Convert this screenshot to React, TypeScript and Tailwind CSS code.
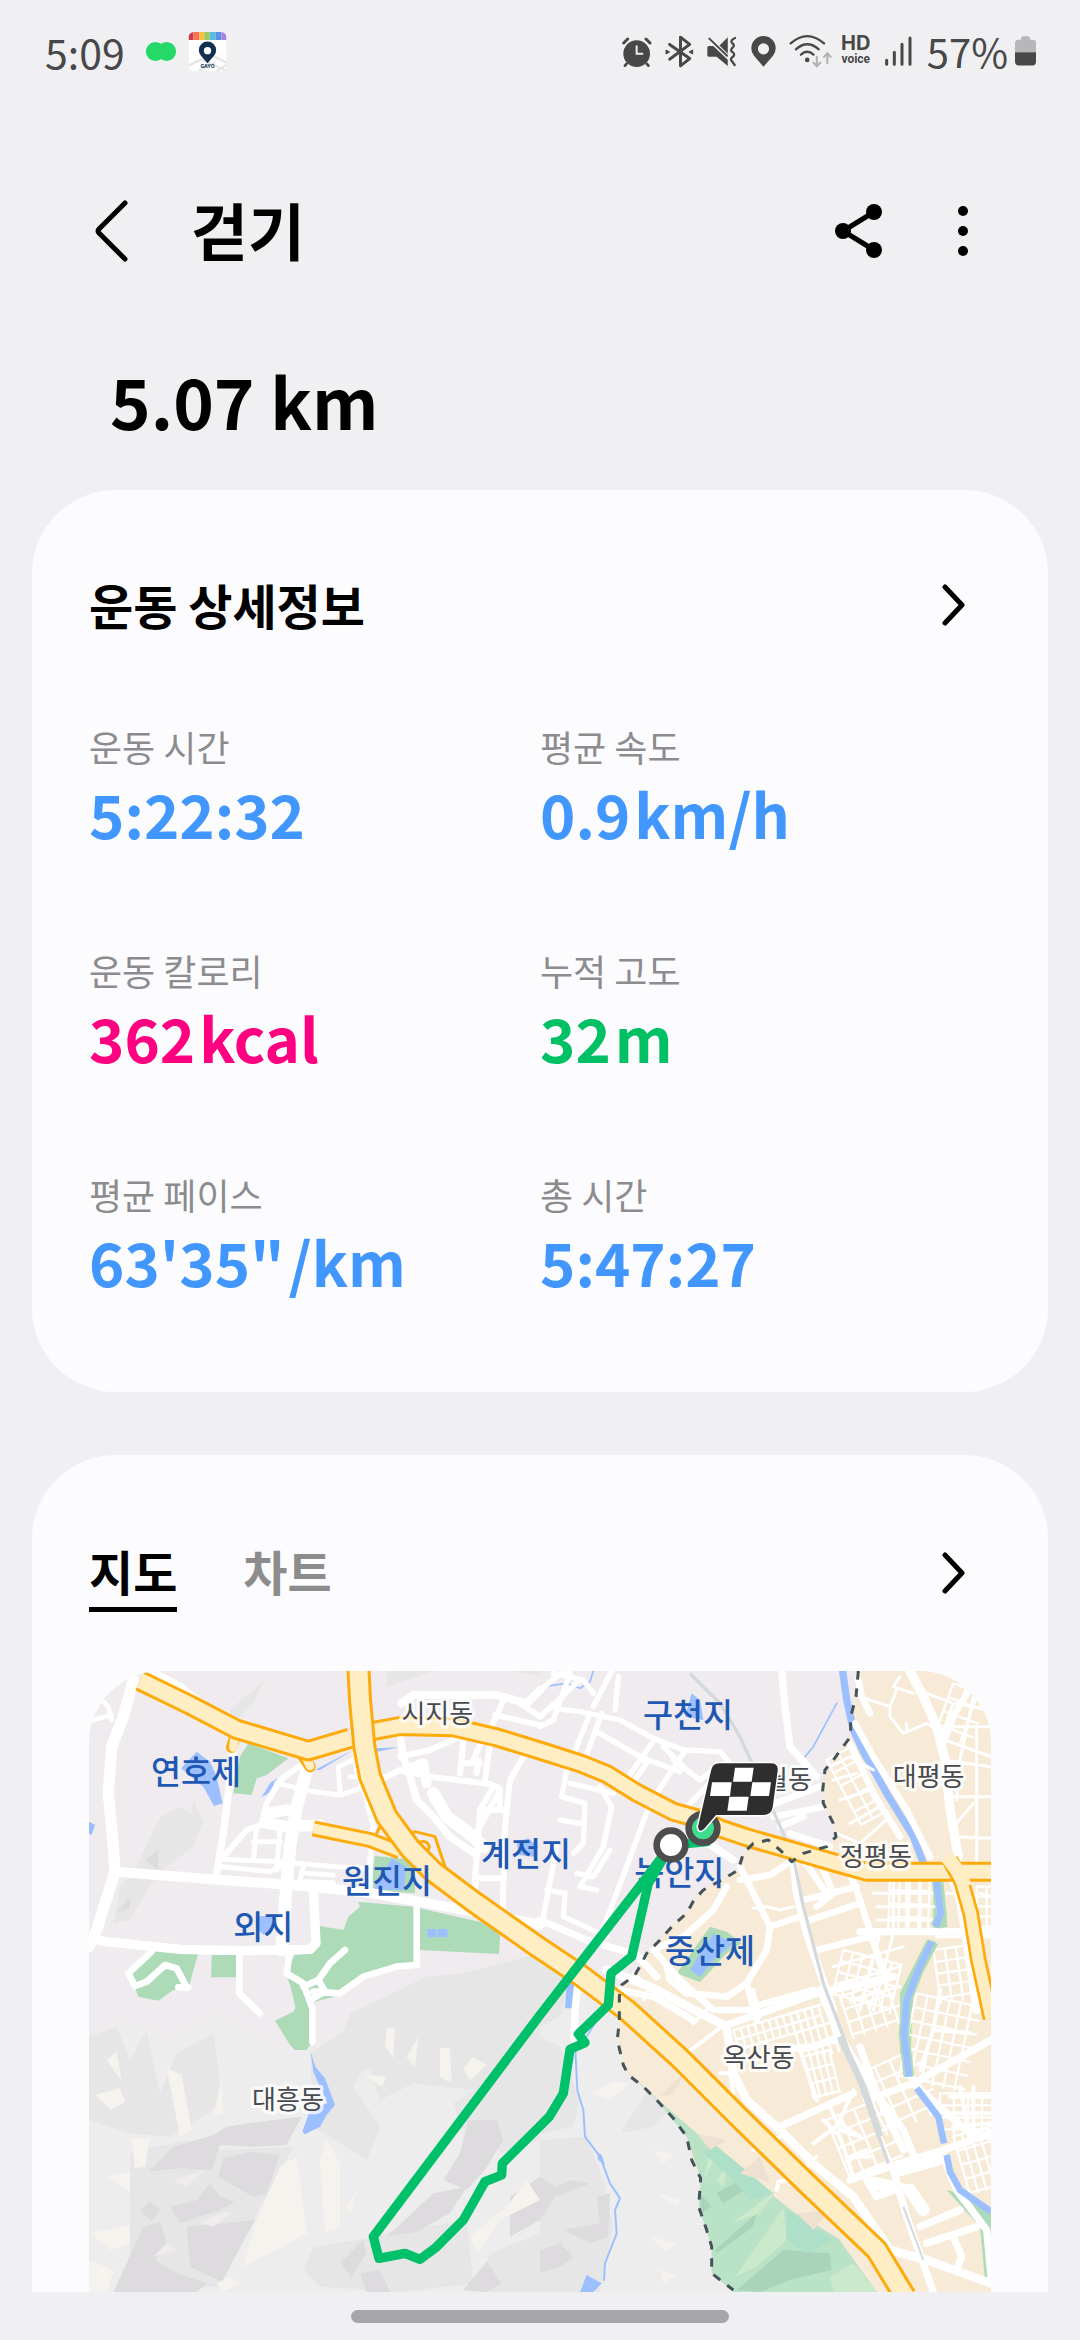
import React from "react";

type Stroke = [number, string];

const ink = "#484848";

/* ---------- Status bar icons ---------- */

function AppBadge() {
  return (
    <svg viewBox="0 0 114 117" className="h-[39px] w-[39px]" aria-hidden="true">
      <clipPath id="badge">
        <rect width="114" height="117" rx="16" />
      </clipPath>
      <g clipPath="url(#badge)">
        <rect width="114" height="117" fill="#fff" />
        <path d="M0 100L40 82L114 117M30 117L80 90M70 70L114 92M85 117L114 98" stroke="#e6e6e8" strokeWidth="7" fill="none" />
        <rect width="15" height="24" fill="#cf3948" />
        <rect x="15" width="17" height="24" fill="#fb7355" />
        <rect x="32" width="15" height="24" fill="#fdbe4b" />
        <rect x="47" width="17" height="24" fill="#9dcb62" />
        <rect x="64" width="17" height="24" fill="#56bde4" />
        <rect x="81" width="18" height="24" fill="#5a8fe4" />
        <rect x="99" width="15" height="24" fill="#a383df" />
        <path d="M57 94L38 72A26 26 0 1 1 76 72Z" fill="#12304f" />
        <circle cx="57" cy="56" r="11" fill="#fff" />
        <text x="57" y="109" textAnchor="middle" fontSize="15" fontWeight="700" fontFamily="Inter, sans-serif" fill="#12304f">GAYO</text>
      </g>
    </svg>
  );
}

function StatusIcons() {
  return (
    <>
      <svg viewBox="62 103 90 93" className="h-[31px] w-[30px]" aria-label="알람">
        <circle cx="106" cy="156" r="40" fill={ink} />
        <path d="M67 124L79 112M146 124L134 112" stroke={ink} strokeWidth="9" strokeLinecap="round" />
        <path d="M76 186L71 192M136 186L141 192" stroke={ink} strokeWidth="8" strokeLinecap="round" />
        <path d="M106 134V156H123" stroke="#f0f0f2" strokeWidth="6" fill="none" strokeLinecap="round" />
      </svg>
      <svg viewBox="189 101 88 99" className="ml-[13px] h-[33px] w-[29px]" aria-label="블루투스">
        <path d="M203 129L264 172L236 194V107L264 129L203 174" stroke={ink} strokeWidth="9" fill="none" strokeLinecap="round" strokeLinejoin="round" />
        <path d="M192 146L203 152L192 158ZM273 146L262 152L273 158Z" fill={ink} stroke={ink} strokeWidth="3" strokeLinejoin="round" />
      </svg>
      <svg viewBox="313 104 92 94" className="ml-3 h-[31px] w-[31px]" aria-label="진동">
        <path d="M316 139Q316 134 321 134H334L378 176V195L344 167H321Q316 167 316 162ZM378 108V158L353 133Z" fill={ink} />
        <path d="M322 112L376 164" stroke={ink} strokeWidth="6" strokeLinecap="round" />
        <path d="M400 110Q384 118 391 125Q402 132 391 141Q384 148 394 154Q402 162 391 169Q384 176 392 182L399 192" stroke={ink} strokeWidth="7" fill="none" strokeLinecap="round" />
      </svg>
      <svg viewBox="446 103 76 94" className="ml-[14px] h-[31px] w-[25px]" aria-label="위치">
        <path fillRule="evenodd" d="M484 196L455 163A37 37 0 1 1 513 163ZM484 125A17 17 0 1 0 484 159A17 17 0 1 0 484 125Z" fill={ink} />
      </svg>
      <svg viewBox="562 100 130 102" className="ml-[13px] h-[34px] w-[43px]" aria-label="와이파이">
        <g stroke={ink} strokeWidth="7" fill="none" strokeLinecap="round">
          <path d="M567 128Q617 84 668 128" />
          <path d="M583 146Q617 115 652 146" />
          <path d="M598 162Q617 145 636 162" />
        </g>
        <circle cx="617" cy="178" r="7" fill={ink} />
        <path d="M646 168V196M636 186L646 197L657 186M678 188V159M668 169L678 158L688 169" stroke="#b0b0b2" strokeWidth="6" fill="none" strokeLinecap="round" />
      </svg>
      <div className="ml-2 flex w-8 flex-col items-center font-[Inter,sans-serif] font-bold text-[#484848]">
        <span className="text-[20px] leading-4">HD</span>
        <span className="font-[Roboto,sans-serif] text-[12px] leading-4">voice</span>
      </div>
      <svg viewBox="850 106 84 90" className="ml-[12px] h-[30px] w-7" aria-label="신호">
        <path d="M858 179V191M881 155V191M904 131V191M928 112V191" stroke={ink} strokeWidth="9" strokeLinecap="round" />
      </svg>
      <span className="ml-[15px] text-[40px] leading-[48px] text-[#484848]">57%</span>
      <svg viewBox="1241 107 64 90" className="ml-[7px] h-[30px] w-[21px]" aria-label="배터리">
        <path d="M1241 156V128Q1241 118 1252 118H1259Q1259 107 1266 107H1280Q1287 107 1287 118H1294Q1305 118 1305 128V156Z" fill="#b7b7b9" />
        <path d="M1241 156H1305V184Q1305 196 1294 196H1252Q1241 196 1241 184Z" fill={ink} />
      </svg>
    </>
  );
}

function Chevron() {
  return (
    <svg viewBox="0 0 24 42" className="h-[42px] w-6" fill="none" stroke="#000" strokeWidth="5" strokeLinecap="round" strokeLinejoin="round" aria-hidden="true">
      <path d="M4 3L21 21L4 39" />
    </svg>
  );
}

/* ---------- Map ---------- */

const westStreets: Stroke[] = [
  [34, "M160 60L130 170L95 260L85 400L100 560L105 635L50 810L27 860"],
  [30, "M105 635L300 650L420 660L640 675L880 700L1180 755L1380 795"],
  [28, "M27 835L80 845L300 868L500 872L690 868L708 850L700 690"],
  [22, "M465 230L445 400L430 520L410 640"],
  [18, "M430 590L500 510L545 495L560 430L600 360L670 310"],
  [38, "M680 330L650 440L630 560L620 670L605 870"],
  [34, "M560 460L620 450M560 490L620 500L720 495"],
  [15, "M590 370L700 395L780 405L860 380M780 400L775 320L830 295M810 350H860M425 620L570 635L620 610M430 598L600 605L770 620L870 625M530 500L520 600M600 510L590 630M520 545H600M670 620L660 660M680 640L760 645M670 665L760 668"],
  [16, "M820 210L830 330L860 420L880 500L870 600L870 700"],
  [22, "M960 225L970 290L990 350L1010 420L1060 470L1110 530L1190 585"],
  [38, "M1060 400L1100 470L1180 530L1210 560"],
  [30, "M980 330L1030 310L1040 370"],
  [18, "M900 360L960 330L1050 350L1230 372L1258 385L1260 450M960 290L1050 270L1140 230M1230 250L1215 360M1330 290L1290 360L1275 500L1268 750M1150 240L1140 340M1200 255L1180 300M1195 300L1190 340M1150 310H1200M1240 380L1200 450L1185 660M1200 450H1270M1190 655H1270M1200 500L1260 390M1190 650L1180 720"],
  [24, "M965 130L1000 105H1250L1340 130L1380 90"],
  [17, "M1275 110L1235 200L1230 250M1245 165L1380 195M1320 130L1380 170"],
  [14, "M50 105L85 140L95 180M30 182L95 165"],
  [24, "M210 33L300 80L350 120"],
  [20, "M630 870L620 940L670 970L697 1045V1145M1010 740V915L950 920L850 950L780 1000L700 995L735 995L715 960M795 870L750 910L715 960L670 980M690 1020L735 995"],
  [20, "M478 880V1000L540 1060"],
  [20, "M215 875L145 940L165 978L200 965L255 915L290 925L322 985M295 982H325"],
];

const midStreets: Stroke[] = [
  [16, "M0 90L50 50L80 33M90 40L40 180L0 200M40 145L120 155L240 180L340 235L430 270L540 275L570 310M235 50L225 150M215 33L160 140M185 160L130 310M150 160L90 310M170 215L300 290L420 335M345 235L265 350M430 280L330 430L260 620L180 830M160 100L130 60L40 40M0 170L120 60M370 260L440 330M300 290L320 310L270 380M400 300L480 360L520 330M440 440L520 360M80 330L65 410L135 430L130 550L100 580M90 370L220 400M180 380L215 440L190 560L120 680L170 690M50 560L10 770M20 690L75 700L70 770L200 830M60 480L120 490M110 640L160 650L210 570"],
  [22, "M0 780L140 840L290 885L350 950M440 520L520 560L580 600"],
  [22, "M725 33L735 140L750 260L830 350"],
  [20, "M680 440L840 380M700 470L850 440M720 500L790 470M750 520L870 560"],
];

const eastStreets: Stroke[] = [
  [28, "M1110 33L1150 110L1190 200L1215 300L1230 450L1255 590"],
  [20, "M1310 50L1240 170L1205 260M990 160L965 110L955 60M930 250L1000 400L1080 530M945 190L1000 290L1100 450L1170 590"],
  [9, "M1160 100L1240 130L1353 150M1260 60L1353 100M1290 50L1353 80M1230 200L1353 200M1215 240L1353 290M1240 130L1200 240M1300 110L1260 300L1250 420M1080 50L1060 80L1120 100M1070 90L1050 140L960 110M1050 140V170L1090 220L1160 190L1210 220M1100 190V210M1210 300L1353 320M1240 410H1353M1310 200V600M1240 530L1353 535M1240 500L1300 430M870 320L930 290L1000 330M880 360L950 340M900 420L990 390M930 490L1020 440M890 520L960 550L1050 470M910 560L1000 620"],
  [24, "M760 600L770 700L800 820L880 1050M1230 640L1260 720L1280 850L1310 1050"],
  [20, "M600 620L650 720L690 800L680 870L620 970L560 1010L440 1000L390 960L380 920M560 680L520 750L430 830L340 870M600 660L690 645L760 600M690 800L780 770M790 720L950 680M810 780L960 730M930 640L960 720L1030 940M850 630L880 700L830 740M830 870L1010 825M790 600L860 700M350 880L420 960L520 1050L640 1050M620 970L650 1080M640 1040L820 990M240 990L340 1010L460 1080"],
  [9, "M640 745L680 740L720 750L760 740M1060 650V800M1100 650V800M1140 660V800M1000 700H1180M1010 740H1190M1010 780H1180M880 920L1090 860M900 970L1080 920M930 1020L1080 980M1060 820L1000 1050M1020 820L960 1050M280 940L330 980L310 1020M1190 830H1353M1220 700H1260M1320 700L1353 710"],
  [22, "M960 815H1353"],
];

const southStreets: Stroke[] = [
  [26, "M200 -60L330 -10L560 110L580 250L620 330L720 420L830 530L940 620L1050 780L1160 810L1353 880"],
  [22, "M560 105L830 10L1060 -40M840 0L900 140L1000 300L1090 420L1130 520M720 410L940 310M900 140L820 170L760 175M980 330L1120 280L1353 150M960 170L1010 310L1090 480M1120 280L1220 370L1290 430L1353 440M930 570L1080 520L1210 480L1353 430M1060 540L1100 680L1180 906M980 570L1010 620L1090 590M1210 500L1250 600L1340 720L1353 860M1140 710L1260 660M1160 760L1310 710M1240 740L1265 800L1250 840"],
  [12, "M1180 120L1290 130M1200 0L1180 120L1140 240M1230 320H1353M1220 370H1353M1240 410L1353 400M1300 290V430M1260 290L1280 400M780 180L830 330M850 390L900 440L940 560M820 460L900 400L960 440M870 350L900 420L960 440M940 300L900 390M830 500L790 540M980 480L930 500L990 500M540 250H580M545 110L440 190M460 100L500 60M570 250L580 310M710 600L715 575L750 570M640 480L740 430M250 10L290 50M640 0L660 80"],
  [38, "M1080 540L1190 510M1000 580L1060 590M1110 600L1150 660"],
];

const hillsDark = [
  "M205 1535L280 1460L400 1425L440 1400L540 1385L665 1370L620 1455L520 1460L420 1455L395 1530L300 1525Z",
  "M430 1495L510 1475L600 1485L560 1600L520 1610L415 1550Z",
  "M320 1700L525 1680L425 1865L330 1820Z",
  "M180 1650L210 1625L240 1650L215 1685ZM270 1640L350 1620L390 1570L420 1610L465 1625L420 1650L300 1690Z",
  "M100 1896L190 1700L240 1685L260 1750L225 1800L290 1840L380 1870L350 1896Z",
  "M1140 1480L1165 1380L1250 1380L1270 1440L1215 1530L1160 1590L1090 1560Z",
  "M920 1730L1060 1600L1160 1580L1110 1660L1010 1715Z",
  "M780 1810L850 1740L860 1780L815 1850ZM840 1840L900 1830L930 1896H860Z",
  "M1150 1890L1220 1805L1265 1870L1220 1896ZM1290 1610L1380 1550L1440 1590L1380 1680L1290 1730Z",
  "M195 600L235 570V630ZM110 760L150 710L150 745Z",
  "M1410 1590L1470 1560L1530 1570L1430 1610ZM1550 1610L1590 1600L1585 1730L1530 1750L1450 1710L1560 1690ZM1380 1770L1440 1750L1480 1790L1440 1820L1380 1840Z",
];

const hillsLight = [
  "M27 1130L110 1100L150 1200L200 1110L240 1300L290 1180L400 1120L430 1330L270 1430L150 1420L27 1380Z",
  "M150 1480L320 1440L420 1470L640 1460L530 1660L420 1880L150 1896Z",
  "M240 470L300 440L370 480L340 560L260 620L200 690L150 780L100 790L120 680L160 640Z",
  "M340 420L365 480L330 500ZM450 150L550 65L520 130L460 190Z",
  "M920 33H1060L920 80ZM1300 33L1380 50V33Z",
  "M810 1060L1040 950L1150 940L1380 880L1380 1440L1270 1480L1140 1400L1120 1330L1180 1290L1000 1270L900 1320L870 1230L750 1230Z",
  "M690 1180L810 1100L860 1210L820 1280L900 1400L860 1500L700 1400Z",
  "M670 1830L700 1760L830 1740L970 1710L1160 1680L1180 1870L960 1896L720 1880Z",
  "M1380 920L1450 910L1470 960L1440 1070L1380 1100ZM1380 1130L1440 1160L1500 1320L1480 1400L1380 1420ZM1620 1420L1700 1300L1790 1330L1720 1400Z",
  "M1380 1440L1520 1430L1570 1560L1600 1700L1560 1896H1380Z",
  "M1230 1780L1380 1720V1896H1180ZM1230 1340L1310 1350L1320 1420L1260 1380Z",
];

const hillsCream = [
  "M80 1200L110 1175L125 1265ZM45 1305L120 1285L135 1325L95 1350ZM260 1225L305 1245L335 1410L300 1430Z",
  "M400 1370L425 1255L430 1360ZM155 1435H210L195 1520L165 1525ZM85 1550L150 1535V1600ZM30 1720L150 1695V1750L90 1770ZM27 1800L100 1830L80 1896H27Z",
  "M600 1520L650 1490L680 1720L600 1765L490 1820L530 1680ZM720 1500L740 1440L780 1510V1705L735 1715Z",
  "M920 1105H945L940 1195L915 1160ZM980 1190L1015 1130L1005 1225ZM1080 1165H1110L1115 1270L1080 1250ZM1150 1225L1180 1190L1220 1215L1170 1260ZM855 1245L920 1250L905 1280Z",
  "M1170 1730L1280 1640L1340 1560L1380 1620L1260 1680L1195 1780ZM800 1640L830 1590L815 1660ZM410 1870L450 1850L480 1870L430 1896Z",
  "M1530 1300L1600 1265L1650 1270L1590 1320ZM1720 1470L1780 1485L1750 1510ZM1730 1600L1800 1620L1790 1640ZM1710 1730L1790 1750L1760 1775ZM1740 1830L1790 1845L1750 1870Z",
];

const grids = [
  { x: 1960, y: 1110, w: 260, h: 60, gap: 22, row: 30, angle: -16 },
  { x: 2130, y: 1060, w: 110, h: 150, gap: 22, row: 60, angle: -16 },
  { x: 2170, y: 1190, w: 80, h: 130, gap: 20, row: 42, angle: -14 },
  { x: 2290, y: 870, w: 180, h: 150, gap: 30, row: 34, angle: 14 },
  { x: 2280, y: 1010, w: 160, h: 130, gap: 36, row: 40, angle: -18 },
  { x: 2560, y: 870, w: 150, h: 160, gap: 34, row: 36, angle: -8 },
  { x: 2510, y: 1000, w: 200, h: 260, gap: 34, row: 42, angle: 12 },
  { x: 2580, y: 1300, w: 150, h: 130, gap: 42, row: 36, angle: 0 },
  { x: 2620, y: 1430, w: 120, h: 180, gap: 26, row: 44, angle: -16 },
  { x: 2240, y: 1380, w: 170, h: 190, gap: 44, row: 46, angle: -22 },
  { x: 2340, y: 1240, w: 180, h: 200, gap: 48, row: 44, angle: -24 },
  { x: 2430, y: 650, w: 120, h: 160, gap: 30, row: 40, angle: 2 },
  { x: 2620, y: 70, w: 110, h: 160, gap: 40, row: 44, angle: 20 },
  { x: 2240, y: 300, w: 80, h: 220, gap: 40, row: 44, angle: -28 },
  { x: 2690, y: 680, w: 60, h: 150, gap: 30, row: 30, angle: 0 },
];

const border =
  "M2335 33L2328 110L2312 170L2312 230L2285 265L2260 300L2235 330L2228 390L2230 430L2260 490L2268 530L2240 560L2170 580L2135 605L2100 570L2065 540L2020 550L1990 580L1975 630L1925 660L1870 690L1842 720L1820 760L1780 795L1740 840L1700 880L1682 915L1665 945L1625 975L1618 1010V1080L1612 1140L1630 1215L1645 1245L1690 1280L1730 1320L1780 1375L1820 1430L1835 1500L1862 1555L1856 1640L1880 1710L1895 1760V1840L1960 1890";

const highways: [string, number, number][] = [
  ["M700 505L870 540L960 575", 48, 30],
  ["M180 62L330 135L470 208L685 272L810 235", 64, 46],
  ["M870 215L960 198L1120 202L1250 232L1380 272L1500 310L1580 342L1670 398L1780 455L1870 480L1920 505L2000 532L2140 572L2270 610L2360 635H2733", 60, 42],
  ["M2610 600L2645 665L2672 760L2695 900L2733 1075", 50, 34],
  ["M835 20L840 120L853 260L870 350L920 470L990 565L1060 635L1180 725L1380 865L1500 945L1580 1005L1640 1050L1800 1195L1980 1375L2180 1570L2390 1770L2475 1910", 72, 54],
];

const places = [
  { name: "시지동", x: 1072, y: 188 },
  { name: "대평동", x: 2546, y: 378 },
  { name: "정평동", x: 2388, y: 618 },
  { name: "대흥동", x: 624, y: 1346 },
  { name: "옥산동", x: 2036, y: 1220 },
];

const ponds = [
  { name: "연호제", x: 348, y: 372 },
  { name: "구천지", x: 1824, y: 202 },
  { name: "원진지", x: 921, y: 700 },
  { name: "계전지", x: 1338, y: 618 },
  { name: "녹안지", x: 1798, y: 674 },
  { name: "중산제", x: 1890, y: 910 },
  { name: "외지", x: 550, y: 838 },
];

function Streets({ items }: { items: Stroke[] }) {
  return (
    <>
      {items.map(([width, d]) => (
        <path key={d} d={d} strokeWidth={width} />
      ))}
    </>
  );
}

function StreetGrid({ x, y, w, h, gap, row, angle }: (typeof grids)[number]) {
  const lines: string[] = [];
  for (let i = 0; i <= w; i += gap) lines.push(`M${i} 0V${h}`);
  for (let j = 0; j <= h; j += row) lines.push(`M0 ${j}H${w}`);
  return <path d={lines.join("")} strokeWidth="7" transform={`translate(${x} ${y}) rotate(${angle})`} />;
}

function RouteMap() {
  return (
    <svg
      viewBox="27 33 2706 1863"
      className="block w-full rounded-t-[72px]"
      role="img"
      aria-label="걷기 경로 지도"
      fontFamily="'Noto Sans CJK KR', sans-serif"
    >
      <rect x="27" y="33" width="2706" height="1863" fill="#efebee" />

      <path d="M27 1130L130 1080L260 1140L400 1060L560 1130L640 1200L860 1060L1380 900L1640 1100L1690 1290L1830 1440L1900 1896H27Z" fill="#eeeeee" opacity="0.7" />
      <g fill="#e6e6e7">{hillsLight.map((d) => <path key={d} d={d} />)}</g>
      <g fill="#dddbde">{hillsDark.map((d) => <path key={d} d={d} />)}</g>
      <g fill="#f6f3ee">{hillsCream.map((d) => <path key={d} d={d} />)}</g>
      <path d="M280 1560L375 1530L320 1580ZM360 1690L430 1655L455 1660L400 1700ZM220 1790L260 1750L290 1770Z" fill="#efebee" />

      <path d={border + "L2733 1896V33Z"} fill="#f7ead6" />
      <path d="M1630 1225L1780 1360L1980 1530L2140 1655L2275 1735L2390 1896H1960L1895 1840V1760L1856 1640L1862 1555L1820 1430L1730 1320Z" fill="#b9e2c6" />
      <path d="M1910 1600L1980 1560L2010 1580L1930 1630ZM1905 1770L2030 1660L2020 1700L1910 1780ZM1970 1890L2110 1770L2250 1780L2255 1830L2130 1860L2040 1896ZM1860 1600L1895 1640L1865 1660Z" fill="#abd3bb" />
      <path d="M1910 1560L1950 1500L1930 1580ZM1955 1690L2090 1590L2040 1660ZM1965 1850L2110 1645L2120 1740L2030 1820ZM2250 1850L2320 1810L2390 1896H2260ZM1890 1470L1915 1480L1870 1560Z" fill="#cbeacb" />
      <path d="M1870 1480L1900 1450L2080 1600L2010 1620L1960 1560ZM2120 1650L2260 1740L2180 1780L2120 1740Z" fill="#aedfc9" />
      <path d="M1740 1310L1800 1250L1820 1230L1780 1300ZM1980 1540L2040 1490L2070 1570ZM1850 1420L1940 1440L1890 1470ZM2150 1660L2250 1650L2200 1710Z" fill="#efe1d2" />

      <g fill="#addbb8">
        <path d="M480 290L505 250L625 295L560 345L530 355L515 405L460 400Z" />
        <path d="M885 588L1005 600V700L870 690Z" />
        <path d="M720 798L790 810L805 770L840 740L835 725L1000 740L1262 800L1257 882L1020 870L1015 910L850 950L780 1005L690 1030L660 1100L620 930L645 885L700 880L720 850Z" />
        <path d="M395 885H468V952H393ZM230 870L355 880L340 930L325 990H280L235 1022L175 1010L150 940Z" />
        <path d="M620 950L655 1030L640 1055L585 1082L630 1155L645 1170H680L697 1145L690 1040Z" />
        <path d="M1890 800L1940 815L1985 850L1940 880L1860 967L1790 940Z" />
        <path d="M2560 665L2590 660L2602 800L2560 810Z" />
        <path d="M2540 840L2568 845L2500 1000L2495 1100L2490 1260L2460 1180L2460 1000Z" />
        <path d="M2600 1590L2640 1600L2733 1660V1860L2715 1860L2700 1700Z" />
      </g>

      <g fill="#9cc0ff">
        <path d="M350 275L390 305L410 350L428 430L402 438L370 380L303 325Z" />
        <path d="M528 770L580 765L575 810L550 825L528 800ZM935 595L978 620L972 690L880 688ZM1042 807H1068V832H1042ZM1072 807H1103V832H1072ZM27 485L45 495L35 525L27 522Z" />
        <path d="M1310 545L1345 535L1375 560L1360 590L1315 585ZM1835 100L1860 120L1870 180L1815 170Z" />
        <path d="M1900 820L1960 850L1900 900L1860 950L1830 930Z" />
        <path d="M692 1175L706 1220L735 1255L765 1335L740 1365L720 1400L675 1423L667 1415L690 1350L742 1330L700 1235Z" />
        <path d="M605 345L565 400L545 412L570 370ZM705 330L800 280L820 270L720 330ZM885 265L960 262L890 275ZM1460 970H1483L1477 1045H1455Z" />
        <path d="M1500 1896L1520 1845L1565 1870L1540 1896ZM1550 1475L1565 1485L1575 1515L1555 1500Z" />
      </g>
      <g fill="none" stroke="#9cc0ff" strokeLinecap="round" strokeLinejoin="round">
        <path d="M2288 33L2300 120L2320 210L2350 275L2420 400L2500 530L2530 610" strokeWidth="22" />
        <path d="M1485 1150L1492 1290L1510 1350L1515 1430L1560 1490L1590 1570L1620 1615L1605 1650L1610 1720L1575 1810L1572 1860" strokeWidth="6" />
        <path d="M1540 33L1530 65L1500 85L1460 70L1390 80M2270 130L2200 260L2175 290M1545 1090L1520 1130" strokeWidth="5" />
      </g>

      <g fill="none" stroke="#fff" strokeLinecap="round" strokeLinejoin="round">
        <Streets items={westStreets} />
        <g transform="translate(1380 0)">
          <Streets items={midStreets} />
          <Streets items={eastStreets} />
        </g>
        <g transform="translate(1380 990)">
          <Streets items={southStreets} />
        </g>
        {grids.map((g) => <StreetGrid key={`${g.x}-${g.y}`} {...g} />)}
        <path d="M1482 1140L1486 1040L1495 960" strokeWidth="22" />
      </g>

      <g fill="none" stroke="#d4d9db">
        <path d="M1830 40L1920 130L1980 230L2070 430L2140 590L2170 740L2230 970L2290 1130L2425 1510" strokeWidth="10" />
        <path d="M2280 1130L2350 1280L2400 1430" strokeWidth="20" />
        <path d="M2470 1640L2530 1800" strokeWidth="6" />
      </g>
      <g fill="none" strokeLinejoin="round">
        <path d="M2572 665L2584 760L2567 800M2560 845L2515 930L2480 1020L2472 1120L2487 1250" stroke="#addbb8" strokeWidth="32" />
        <path d="M2570 665L2582 760L2567 800M2555 845L2515 930L2480 1020L2472 1120L2487 1250M2510 1285L2575 1370L2592 1450M2600 1485L2610 1535L2640 1590L2733 1655" stroke="#9cc0ff" strokeWidth="20" />
      </g>

      <g fill="none" strokeLinejoin="round">
        <path d="M985 525L1005 515L1065 530L1095 620M880 540L905 490L925 530M1010 550Q1040 535 1048 560Q1045 580 1025 575" stroke="#fdaa0b" strokeWidth="9" />
        <path d="M465 230L455 262M670 290L690 320" stroke="#fdaa0b" strokeWidth="34" strokeLinecap="round" />
        <path d="M465 225L460 262M672 280L690 318" stroke="#ffedc4" strokeWidth="26" strokeLinecap="round" />
        {highways.map(([d, outer, inner]) => (
          <React.Fragment key={d}>
            <path d={d} stroke="#fdaa0b" strokeWidth={outer} />
            <path d={d} stroke="#ffedc4" strokeWidth={inner} />
          </React.Fragment>
        ))}
        <path d="M2600 590L2640 640L2655 680" stroke="#ffedc4" strokeWidth="42" />
        <path d={border} stroke="#465358" strokeWidth="9" strokeDasharray="26 26" />
      </g>

      <g textAnchor="middle">
        <g fontSize="78" fill="#474a4f" stroke="#ffffff" strokeOpacity="0.75" strokeWidth="20" strokeLinejoin="round" paintOrder="stroke">
          <text x="2124" y="386">월동</text>
          {places.map((p) => <text key={p.name} x={p.x} y={p.y}>{p.name}</text>)}
        </g>
        <g fontSize="98" fill="#1f58b3" fontWeight="500">
          {ponds.map((p) => <text key={p.name} x={p.x} y={p.y}>{p.name}</text>)}
        </g>
      </g>

      <path
        d="M1773 555L1690 665L1380 1065L880 1730L897 1795L975 1780L1020 1798L1065 1765L1150 1680L1215 1565L1265 1545L1267 1510L1380 1398L1408 1370L1450 1300L1470 1168L1515 1148L1495 1122L1585 1035L1593 940L1655 890L1705 670L1773 555L1880 545"
        fill="none" stroke="#00c06a" strokeWidth="28" strokeLinejoin="round" strokeLinecap="round"
      />
      <circle cx="1869" cy="505" r="43" fill="#3edc8c" stroke="#4d4d4d" strokeWidth="20" />
      <circle cx="1773" cy="555" r="43" fill="#fff" stroke="#4d4d4d" strokeWidth="20" />
      <path
        d="M1918 310H2072Q2096 310 2093 332L2078 442Q2074 465 2050 465H1908L1874 505Q1858 522 1854 500L1893 332Q1897 310 1918 310Z"
        fill="#2e2e2e" stroke="#fff" strokeWidth="9" strokeLinejoin="round" paintOrder="stroke"
      />
      <path d="M1965 323H2021L2015 365H1959ZM1896 367H1955L1950 408H1890ZM2017 367H2073L2067 408H2011ZM1948 410H2006L2000 452H1942Z" fill="#fff" />
    </svg>
  );
}

/* ---------- Page ---------- */

const stats = [
  { label: "운동 시간", value: "5:22:32", unit: "", color: "text-[#4297ff]" },
  { label: "평균 속도", value: "0.9", unit: "km/h", color: "text-[#4297ff]" },
  { label: "운동 칼로리", value: "362", unit: "kcal", color: "text-[#ff0080]" },
  { label: "누적 고도", value: "32", unit: "m", color: "text-[#00c064]" },
  { label: "평균 페이스", value: "63'35\"", unit: "/km", color: "text-[#4297ff]" },
  { label: "총 시간", value: "5:47:27", unit: "", color: "text-[#4297ff]" },
];

export default function App() {
  return (
    <div className="flex min-h-screen flex-col bg-[#f0f0f2] font-['Noto_Sans_CJK_KR',sans-serif] text-black">
      <div className="flex h-[102px] items-center pr-[44px] pl-[45px]">
        <span className="text-[41px] leading-[48px] text-[#484848]">5:09</span>
        <svg viewBox="0 0 92 58" className="ml-5 h-[19px] w-8" aria-hidden="true">
          <circle cx="29" cy="29" r="29" fill="#25d968" />
          <circle cx="63" cy="29" r="29" fill="#25d968" />
          <rect x="29" y="6" width="34" height="46" fill="#25d968" />
        </svg>
        <div className="ml-[11px]"><AppBadge /></div>
        <div className="ml-auto flex items-center"><StatusIcons /></div>
      </div>

      <header className="mt-16 flex h-[130px] items-center pr-24 pl-[91px]">
        <button type="button" aria-label="뒤로" className="flex w-[42px] justify-center">
          <svg viewBox="0 0 34 62" className="h-[62px] w-[34px]" fill="none" stroke="#000" strokeWidth="5" strokeLinecap="round" strokeLinejoin="round">
            <path d="M30 3L4 29Q2 31 4 33L30 59" />
          </svg>
        </button>
        <h1 className="ml-[58px] pb-1 text-[62px] leading-[90px] font-bold">걷기</h1>
        <button type="button" aria-label="공유" className="ml-auto">
          <svg viewBox="0 0 48 54" className="h-[54px] w-12">
            <path d="M39 8L8 27L39 46" stroke="#000" strokeWidth="5" fill="none" />
            <circle cx="39" cy="8" r="8" />
            <circle cx="8" cy="27" r="8" />
            <circle cx="39" cy="46" r="8" />
          </svg>
        </button>
        <button type="button" aria-label="더보기" className="ml-[59px] flex w-[42px] justify-center">
          <svg viewBox="0 0 10 52" className="h-[52px] w-[10px]">
            <circle cx="5" cy="6" r="5" />
            <circle cx="5" cy="26" r="5" />
            <circle cx="5" cy="46" r="5" />
          </svg>
        </button>
      </header>

      <p className="mt-[54px] pl-[110px] text-[69px] leading-[100px] font-bold">5.07 km</p>

      <main className="flex flex-1 flex-col gap-[63px] px-8 pt-10">
        <section className="rounded-[84px] bg-[#fcfcff] px-[57px] pt-20 pb-[93px]">
          <div className="flex h-[70px] items-center justify-between pr-[26px]">
            <h2 className="pb-[2px] text-[48px] leading-[66px] font-bold">운동 상세정보</h2>
            <button type="button" aria-label="운동 상세정보 보기"><Chevron /></button>
          </div>
          <dl className="mt-[82px] grid grid-cols-2 gap-y-[95px]">
            {stats.map((s) => (
              <div key={s.label}>
                <dt className="text-[36px] leading-[48px] text-[#8c8c8f]">{s.label}</dt>
                <dd className={`mt-[5px] flex gap-1 text-[60px] leading-[76px] font-bold ${s.color}`}>
                  <span>{s.value}</span>
                  {s.unit && <span>{s.unit}</span>}
                </dd>
              </div>
            ))}
          </dl>
        </section>

        <section className="flex-1 rounded-t-[84px] bg-[#fcfcff] px-[57px] pt-[85px]">
          <div className="flex items-start justify-between pr-[26px]">
            <div role="tablist" className="flex gap-[66px] text-[48px] leading-[60px] font-bold">
              <button type="button" role="tab" aria-selected="true" className="border-b-[5px] border-black pb-[7px]">지도</button>
              <button type="button" role="tab" aria-selected="false" className="border-b-[5px] border-transparent pb-[7px] text-[#8c8c8c]">차트</button>
            </div>
            <button type="button" aria-label="지도 보기" className="mt-3"><Chevron /></button>
          </div>
          <div className="mt-[59px]"><RouteMap /></div>
        </section>
      </main>

      <div className="flex h-12 items-center justify-center">
        <div className="h-[13px] w-[35%] rounded-full bg-[#a6a6a8]" />
      </div>
    </div>
  );
}
